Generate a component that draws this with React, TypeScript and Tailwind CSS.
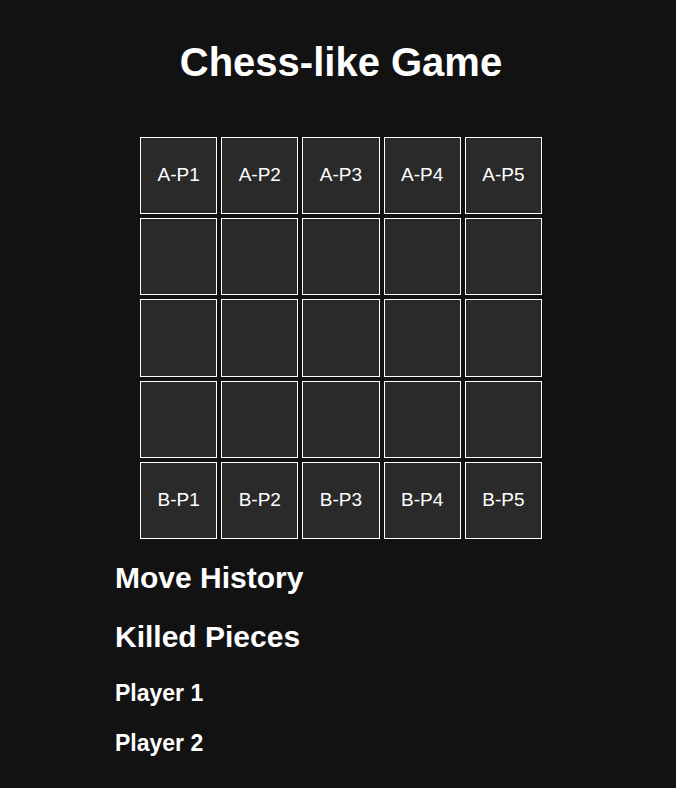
const rows = 5;
const cols = 5;

const pieceAt = (r: number, c: number) => {
  if (r === 0) return `A-P${c + 1}`;
  if (r === rows - 1) return `B-P${c + 1}`;
  return "";
};

export default function App() {
  return (
    <div className="min-h-[788px] w-full bg-[#121212] text-white pt-[39px] font-['Liberation_Sans',Arial,sans-serif]">
      <div className="ml-[115px] w-[452px]">
        <h1 className="text-center text-[40px] leading-[46px] font-bold">Chess-like Game</h1>

        <div className="mx-auto mt-[52px] grid w-[402px] grid-cols-5 gap-1">
          {Array.from({ length: rows * cols }, (_, i) => {
            const r = Math.floor(i / cols);
            const c = i % cols;
            return (
              <div
                key={i}
                className="flex aspect-square items-center justify-center border border-white bg-[#2a2a2a] text-[19px]"
              >
                {pieceAt(r, c)}
              </div>
            );
          })}
        </div>

        <h2 className="mt-[22px] text-[30px] leading-[34px] font-bold">Move History</h2>
        <h2 className="mt-[25px] text-[30px] leading-[34px] font-bold">Killed Pieces</h2>
        <h3 className="mt-[26px] text-[23px] leading-[26px] font-bold">Player 1</h3>
        <h3 className="mt-[24px] text-[23px] leading-[26px] font-bold">Player 2</h3>
      </div>
    </div>
  );
}
